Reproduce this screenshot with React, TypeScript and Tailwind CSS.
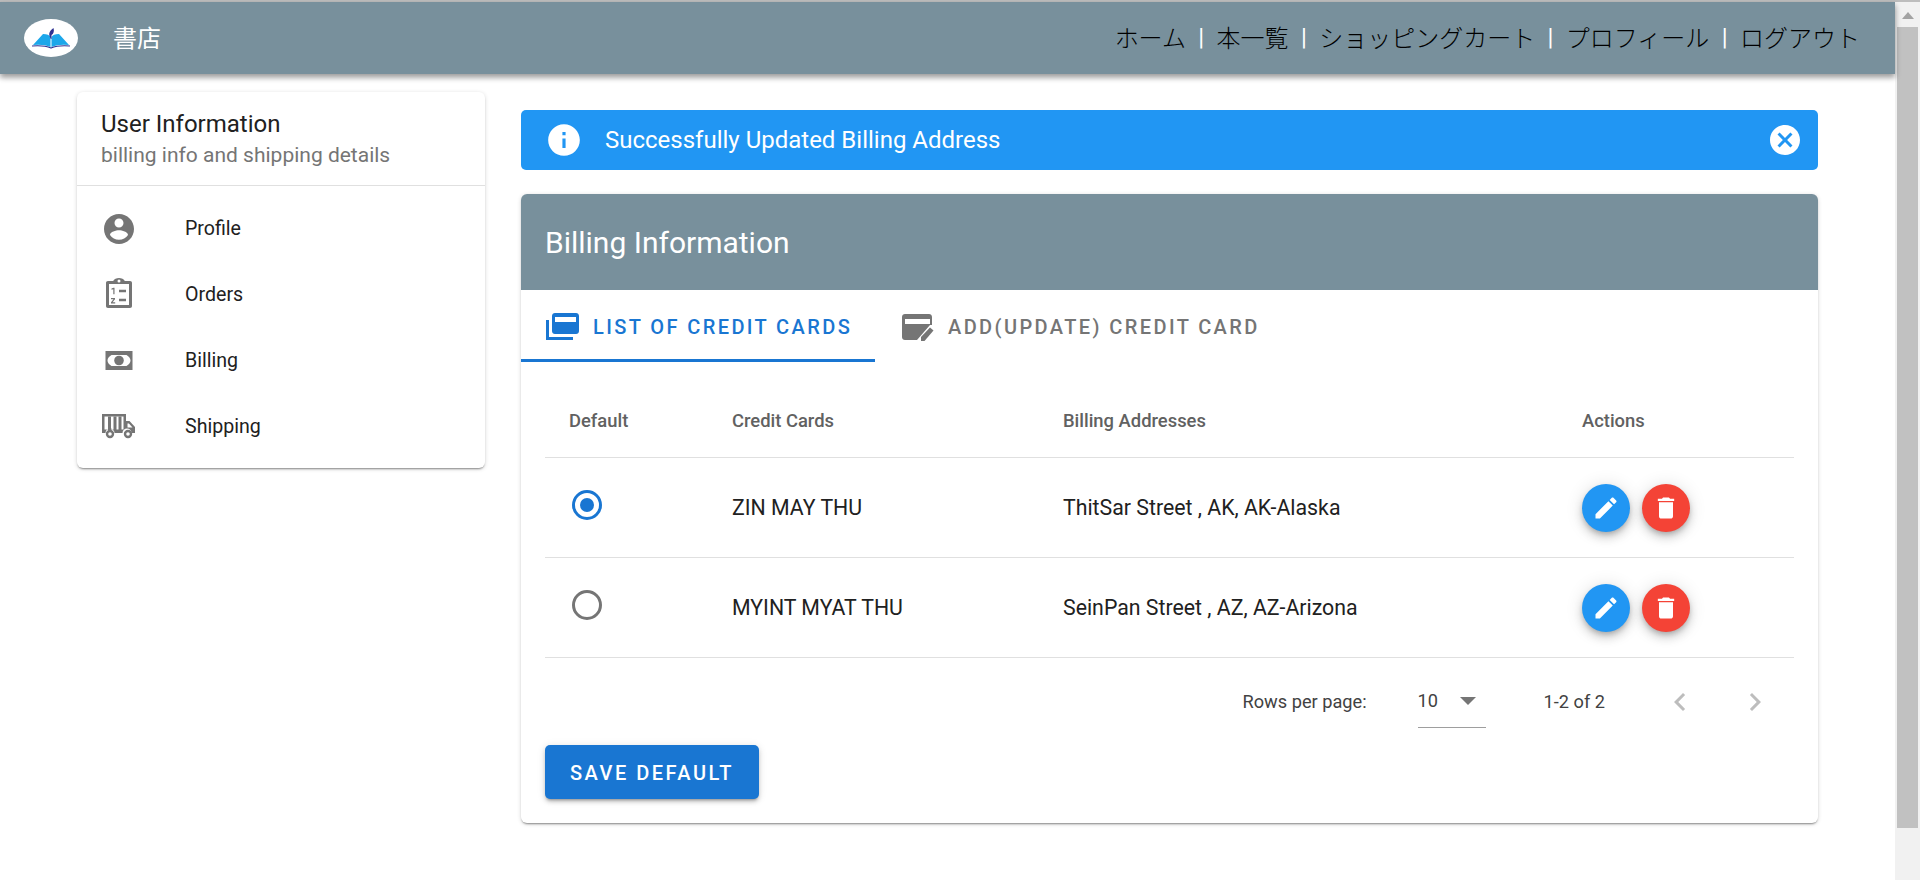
const roboto = "font-['Roboto',sans-serif]";
const cardShadow = "shadow-[0_2px_2px_-1px_rgba(0,0,0,0.4),0_1px_4px_0_rgba(0,0,0,0.16)]";
const fabShadow =
  "shadow-[0_3px_5px_-1px_rgba(0,0,0,0.2),0_6px_10px_0_rgba(0,0,0,0.14),0_1px_18px_0_rgba(0,0,0,0.12)]";

const paths = {
  account:
    "M12 2C6.48 2 2 6.48 2 12s4.48 10 10 10 10-4.48 10-10S17.52 2 12 2zm0 3c1.66 0 3 1.34 3 3s-1.34 3-3 3-3-1.34-3-3 1.34-3 3-3zm0 14.2c-2.5 0-4.71-1.28-6-3.22.03-1.99 4-3.08 6-3.08 1.99 0 5.97 1.09 6 3.08-1.29 1.94-3.5 3.22-6 3.22z",
  create:
    "M3 17.25V21h3.75L17.81 9.94l-3.75-3.75L3 17.25zM20.71 7.04c.39-.39.39-1.02 0-1.41l-2.34-2.34c-.39-.39-1.02-.39-1.41 0l-1.83 1.83 3.75 3.75 1.83-1.83z",
  trash: "M6 19c0 1.1.9 2 2 2h8c1.1 0 2-.9 2-2V7H6v12zM19 4h-3.5l-1-1h-5l-1 1H5v2h14V4z",
  info: "M12 2C6.48 2 2 6.48 2 12s4.48 10 10 10 10-4.48 10-10S17.52 2 12 2zm1 15h-2v-6h2v6zm0-8h-2V7h2v2z",
  cancel:
    "M12 2C6.47 2 2 6.47 2 12s4.47 10 10 10 10-4.47 10-10S17.53 2 12 2zm5 13.59L15.59 17 12 13.41 8.41 17 7 15.59 10.59 12 7 8.41 8.41 7 12 10.59 15.59 7 17 8.41 13.41 12 17 15.59z",
};

function Icon({ d, size, color }: { d: string; size: number; color: string }) {
  return (
    <svg width={size} height={size} viewBox="0 0 24 24" fill={color} className="shrink-0">
      <path d={d} />
    </svg>
  );
}

function Logo() {
  return (
    <div className="w-[54px] h-[38px] rounded-[50%] bg-white flex items-center justify-center">
      <svg width="54" height="38" viewBox="0 0 54 38">
        <path d="M9 26 L19 15 Q25 15 26.5 18 V28 Q20 25 9 26z" fill="#1ca7ea" />
        <path d="M45 26 L35 15 Q29 15 27.5 18 V28 Q34 25 45 26z" fill="#1ca7ea" />
        <path d="M8 27 Q20 26 27 29 Q34 26 46 27" fill="none" stroke="#2e3192" strokeWidth="1.2" />
        <path d="M25.500 17 C24.500 13 27 11 29.500 9 C30.500 12 29.500 15 27.500 16 L27.500 20 L26.800 20z" fill="#2e3192" />
      </svg>
    </div>
  );
}

function OrdersIcon() {
  return (
    <svg width="36" height="36" viewBox="0 0 36 36" className="shrink-0">
      <path
        fillRule="evenodd"
        d="M7 4h5.200C12.900 2.200 15.700 1 18 1s5.100 1.200 5.800 3H29c1.300 0 2 .8 2 2v23c0 1.300-.7 2-2 2H7c-1.300 0-2-.7-2-2V6c0-1.200.7-2 2-2zM8 7v21h20V7zM16.500 4a1.500 1.500 0 1 0 3 0 1.500 1.500 0 1 0-3 0z"
        fill="#757575"
      />
      <path d="M18 12.800h7v2.400h-7zM18 21.800h7v2.400h-7z" fill="#757575" />
      <path d="M10.500 11.500l2-.8h1v6.500h-1.200v-5l-1.800.6zM10 21h4v1.200l-2.400 3h2.600v1.200H10v-1.200l2.500-3H10z" fill="#757575" />
    </svg>
  );
}

function BillingIcon() {
  return (
    <svg width="36" height="36" viewBox="0 0 36 36" className="shrink-0">
      <path
        fillRule="evenodd"
        d="M4.500 8h27v19h-27zM10.500 12 C8 13.500 6.500 15.500 6.500 17.500 C6.500 19.500 8 21.500 10.500 23 H25.500 C28 21.500 29.500 19.500 29.500 17.500 C29.500 15.500 28 13.500 25.500 12z"
        fill="#757575"
      />
      <circle cx="18" cy="17.500" r="4.800" fill="#757575" />
    </svg>
  );
}

function ShippingIcon() {
  return (
    <svg width="36" height="36" viewBox="0 0 36 36" className="shrink-0">
      <path
        fillRule="evenodd"
        d="M1 5h24v7h3.500l5.500 6v6h-3.500a4.500 4.500 0 0 0-9 0H13.500a4.500 4.500 0 0 0-9 0H1zM3.500 7.500V20.500h19V7.500zM26.500 14.500v4h5l-3.600-4z"
        fill="#757575"
      />
      <path d="M7 7.500h3v14H7zM12.500 7.500h3v14h-3zM17.500 7.500h3v14h-3z" fill="#757575" />
      <circle cx="9" cy="25" r="3" fill="none" stroke="#757575" strokeWidth="2.400" />
      <circle cx="27" cy="25" r="3" fill="none" stroke="#757575" strokeWidth="2.400" />
    </svg>
  );
}

function CardsIcon() {
  return (
    <svg width="36" height="36" viewBox="0 0 36 36" className="shrink-0">
      <path
        fillRule="evenodd"
        d="M10 4h21c1.700 0 3 1.300 3 3v15c0 1.700-1.300 3-3 3H10c-1.700 0-3-1.300-3-3V7c0-1.700 1.300-3 3-3zM10 8v5h21V8z"
        fill="#1976d2"
      />
      <path d="M1 11h3v17h24v3H1z" fill="#1976d2" />
    </svg>
  );
}

function CardEditIcon() {
  return (
    <svg width="36" height="36" viewBox="0 0 36 36" className="shrink-0">
      <path
        fillRule="evenodd"
        d="M5 5h24c1.700 0 3 1.300 3 3v8h-2L17 31H5c-1.700 0-3-1.300-3-3V8c0-1.700 1.300-3 3-3zM5 10v5h25v-5z"
        fill="#757575"
      />
      <path d="M21 32v-4l9-9.500 3.500 3-9 10.500z" fill="#757575" />
    </svg>
  );
}

const menu = [
  { label: "Profile", icon: <Icon d={paths.account} size={36} color="#757575" /> },
  { label: "Orders", icon: <OrdersIcon /> },
  { label: "Billing", icon: <BillingIcon /> },
  { label: "Shipping", icon: <ShippingIcon /> },
];

const rows = [
  { name: "ZIN MAY THU", address: "ThitSar Street , AK, AK-Alaska", selected: true },
  { name: "MYINT MYAT THU", address: "SeinPan Street , AZ, AZ-Arizona", selected: false },
];

const nav = ["ホーム", "本一覧", "ショッピングカート", "プロフィール", "ログアウト"];

function Sidebar() {
  return (
    <aside className={`w-[408px] h-[376px] mt-[18px] bg-white rounded-[6px] ${cardShadow} shrink-0`}>
      <div className="h-[94px] border-b border-[#e0e0e0] px-[24px] pt-[16px]">
        <h2 className="text-[24px] leading-[32px] text-[#212121]">User Information</h2>
        <p className="text-[21px] leading-[30px] text-[#757575]">billing info and shipping details</p>
      </div>
      <ul className="pt-[10px]">
        {menu.map((item) => (
          <li key={item.label} className="h-[66px] pl-[24px] flex items-center">
            {item.icon}
            <span className="ml-[48px] text-[19.6px] text-[#212121]">{item.label}</span>
          </li>
        ))}
      </ul>
    </aside>
  );
}

function Radio({ selected }: { selected: boolean }) {
  return (
    <span
      className={`ml-[27px] mb-[5px] w-[30px] h-[30px] rounded-full border-[3px] flex items-center justify-center ${
        selected ? "border-[#1976d2]" : "border-[#757575]"
      }`}
    >
      {selected && <span className="w-[14px] h-[14px] rounded-full bg-[#1976d2]" />}
    </span>
  );
}

function TableGrid() {
  const cols = "grid grid-cols-[163px_331px_519px_236px] items-center border-b border-[#e0e0e0]";
  return (
    <div>
      <div className={`${cols} h-[77px] pt-[3px] text-[18.4px] font-medium text-[#616161]`}>
        <span className="pl-[24px]">Default</span>
        <span className="pl-[24px]">Credit Cards</span>
        <span className="pl-[24px]">Billing Addresses</span>
        <span className="pl-[24px]">Actions</span>
      </div>
      {rows.map((row) => (
        <div key={row.name} className={`${cols} h-[100px] text-[21.3px] text-[#212121]`}>
          <Radio selected={row.selected} />
          <span className="pl-[24px] pt-[1px]">{row.name}</span>
          <span className="pl-[24px] pt-[1px]">{row.address}</span>
          <div className="pl-[24px] flex gap-[12px]">
            <button className={`w-[48px] h-[48px] rounded-full bg-[#2196f3] flex items-center justify-center ${fabShadow}`}>
              <Icon d={paths.create} size={28} color="#fff" />
            </button>
            <button className={`w-[48px] h-[48px] rounded-full bg-[#f44336] flex items-center justify-center ${fabShadow}`}>
              <Icon d={paths.trash} size={28} color="#fff" />
            </button>
          </div>
        </div>
      ))}
    </div>
  );
}

function Pagination() {
  return (
    <div className="h-[87px] flex items-center justify-end pr-[21px] text-[18.2px] text-[#424242]">
      <span>Rows per page:</span>
      <div className="ml-[51px] w-[68px] h-[52px] border-b border-[#9e9e9e] flex items-center justify-between pr-[10px]">
        <span>10</span>
        <svg width="16" height="8" viewBox="0 0 16 8" fill="#757575">
          <path d="M0 0h16L8 8z" />
        </svg>
      </div>
      <span className="ml-[58px]">1-2 of 2</span>
      <svg width="36" height="36" viewBox="0 0 24 24" className="ml-[57px]" fill="#bdbdbd">
        <path d="M15.41 7.41 14 6l-6 6 6 6 1.410-1.410L10.830 12z" />
      </svg>
      <svg width="36" height="36" viewBox="0 0 24 24" className="ml-[39px]" fill="#bdbdbd">
        <path d="M10 6 8.590 7.410 13.170 12l-4.580 4.590L10 18l6-6z" />
      </svg>
    </div>
  );
}

function BillingCard() {
  return (
    <section className={`mt-[24px] h-[629px] bg-white rounded-[6px] overflow-hidden ${cardShadow}`}>
      <div className="h-[96px] bg-[#78909c] flex items-center px-[24px] text-[30px] text-white">
        Billing Information
      </div>
      <div className="h-[72px] flex text-[20px] tracking-[2.4px] font-medium">
        <div className="w-[354px] pl-[24px] pt-[4px] flex items-center gap-[12px] border-b-[3px] border-[#1976d2] text-[#1976d2]">
          <CardsIcon />
          <span>LIST OF CREDIT CARDS</span>
        </div>
        <div className="pl-[25px] pt-[1px] flex items-center gap-[12px] text-[#757575]">
          <CardEditIcon />
          <span>ADD(UPDATE) CREDIT CARD</span>
        </div>
      </div>
      <div className="px-[24px] pt-[19px]">
        <TableGrid />
        <Pagination />
        <button className="w-[214px] h-[54px] pt-[2px] rounded-[5px] bg-[#1976d2] text-white text-[20px] font-medium tracking-[2.5px] shadow-[0_3px_3px_-2px_rgba(0,0,0,0.3),0_3px_4px_0_rgba(0,0,0,0.14),0_1px_8px_0_rgba(0,0,0,0.12)]">
          SAVE DEFAULT
        </button>
      </div>
    </section>
  );
}

export default function App() {
  return (
    <div className={`h-[880px] w-[1920px] overflow-hidden flex flex-col bg-white ${roboto}`}>
      <div className="h-[2px] bg-[#bdbdbd] shrink-0" />
      <div className="flex flex-1 min-h-0">
        <main className="flex-1 min-w-0">
          <header className="h-[72px] bg-[#78909c] flex items-center pl-[24px] pr-[35px] shadow-[0_3px_6px_0_rgba(0,0,0,0.3),0_4px_5px_0_rgba(0,0,0,0.14)] relative">
            <Logo />
            <span className="ml-[35px] mb-[3px] text-[24px] text-white font-['Noto_Sans_CJK_TC',sans-serif]">書店</span>
            <nav className="ml-auto mb-[3px] flex items-center text-[24px] font-light text-black font-['Noto_Sans_CJK_JP',sans-serif]">
              {nav.map((item, i) => (
                <span key={item} className="flex items-center">
                  {i > 0 && <span className="mx-[12.4px] text-white font-normal font-['Roboto',sans-serif]">|</span>}
                  {item}
                </span>
              ))}
            </nav>
          </header>
          <div className="flex pl-[77px]">
            <Sidebar />
            <div className="ml-[36px] w-[1297px] mt-[36px]">
              <div className="h-[60px] rounded-[5px] bg-[#2196f3] flex items-center pl-[24px] pr-[15px] text-white text-[24px]">
                <Icon d={paths.info} size={38} color="#fff" />
                <span className="ml-[22px]">Successfully Updated Billing Address</span>
                <span className="ml-auto">
                  <Icon d={paths.cancel} size={36} color="#fff" />
                </span>
              </div>
              <BillingCard />
            </div>
          </div>
        </main>
        <div className="w-[25px] shrink-0 bg-[#f1f1f1] flex flex-col items-center">
          <span className="mt-[10px] w-0 h-0 border-x-[6px] border-x-transparent border-b-[7px] border-b-[#a3a3a3]" />
          <span className="mt-[8px] w-[21px] h-[801px] bg-[#c1c1c1]" />
        </div>
      </div>
    </div>
  );
}
